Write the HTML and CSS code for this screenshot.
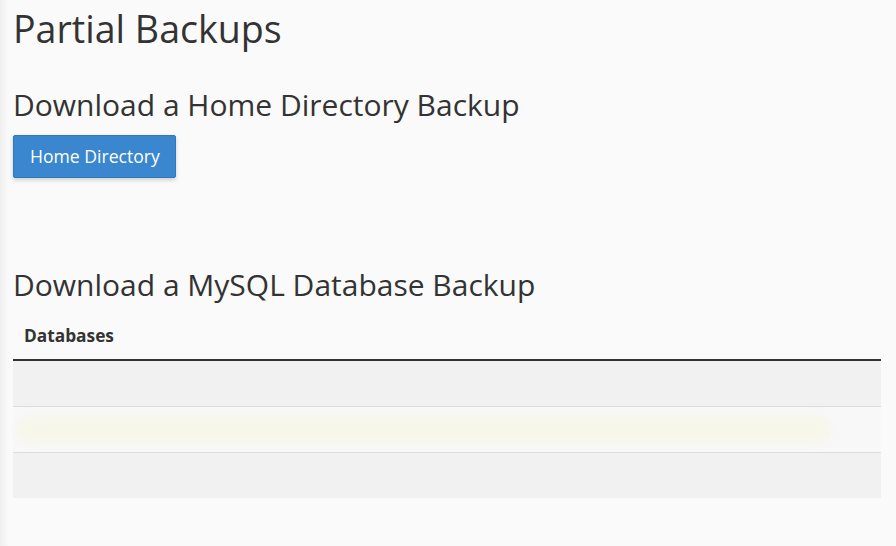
FILE: index.html
```html
<!DOCTYPE html>
<html>
<head>
<meta charset="utf-8">
<link rel="stylesheet" href="styles.css">
</head>
<body>
<div class="page">
  <h1 class="title">Partial Backups</h1>
  <section class="home">
    <h2 class="section-title">Download a Home Directory Backup</h2>
    <button class="btn-primary" type="button">Home Directory</button>
  </section>
  <section class="mysql">
    <h2 class="section-title">Download a MySQL Database Backup</h2>
    <table class="db-table">
      <thead>
        <tr><th>Databases</th></tr>
      </thead>
      <tbody>
        <tr class="odd"><td></td></tr>
        <tr class="even"><td><span class="smudge"></span></td></tr>
        <tr class="odd"><td></td></tr>
      </tbody>
    </table>
  </section>
</div>
</body>
</html>
```

FILE: styles.css
```css
html, body {
  margin: 0;
  padding: 0;
}
body {
  background: linear-gradient(to right, #efefef 0px, #fafafa 9px) #fafafa;
  font-family: "Open Sans", "Noto Sans", sans-serif;
  color: #333;
  width: 896px;
  height: 546px;
  overflow: hidden;
}
.page {
  padding: 7px 15px 0 13px;
}
.title {
  font-size: 37.6px;
  line-height: 44px;
  font-weight: 400;
  margin: 0;
}
.section-title {
  font-size: 30px;
  line-height: 33px;
  font-weight: 400;
  margin: 0;
}
.home {
  margin-top: 37px;
}
.btn-primary {
  display: block;
  margin-top: 14px;
  font-family: inherit;
  font-size: 17.6px;
  line-height: 21px;
  padding: 10px 15px 10px 16px;
  color: #fff;
  background: #3a87d0;
  border: 1px solid #2f78bd;
  border-radius: 2px;
  box-shadow: 0 2px 4px rgba(0,0,0,0.18);
}
.mysql {
  margin-top: 90px;
}
.db-table {
  width: 100%;
  border-collapse: collapse;
  margin-top: 10px;
}
.db-table th {
  text-align: left;
  font-size: 17.3px;
  line-height: 22px;
  font-weight: 700;
  padding: 14px 11px 12px;
  border-bottom: 2px solid #333;
}
.db-table td {
  height: 45px;
  padding: 0 11px;
  border-top: 1px solid #ddd;
}
.db-table tbody tr:first-child td {
  border-top: none;
}
.odd td {
  background: #f1f1f1;
}
.even td {
  background: #f8f8f8;
}
.smudge {
  display: block;
  height: 26px;
  width: 96%;
  margin-left: -6px;
  background: #f6f6e9;
  border-radius: 13px;
  filter: blur(4px);
}
```
